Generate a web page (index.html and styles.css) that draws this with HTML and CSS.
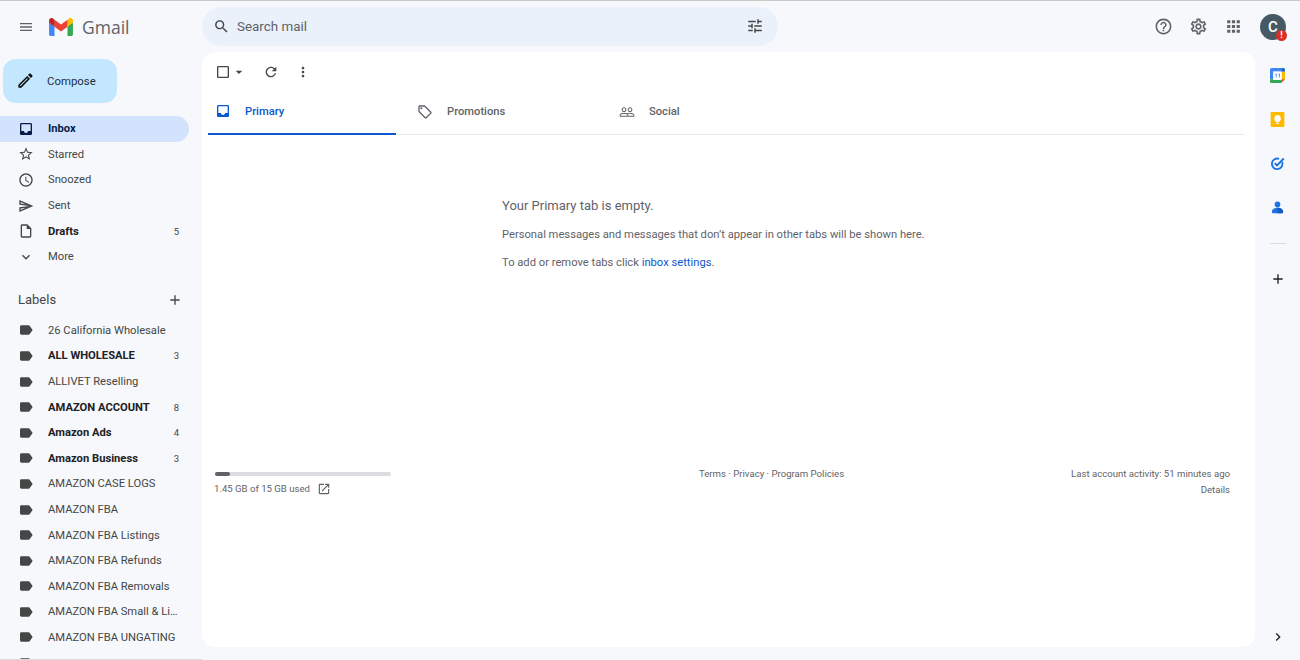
FILE: index.html
```html
<!DOCTYPE html>
<html lang="en">
<head>
    <meta charset="UTF-8">
    <title>Inbox - Gmail</title>
    <link rel="stylesheet" href="styles.css">
</head>
<body>

<svg class="defs" width="0" height="0">
    <symbol id="i-menu" viewBox="0 0 24 24"><path d="M3 18h18v-2H3v2zm0-5h18v-2H3v2zm0-7v2h18V6H3z"/></symbol>
    <symbol id="i-search" viewBox="0 0 24 24"><path d="M15.5 14h-.79l-.28-.27C15.41 12.59 16 11.11 16 9.5 16 5.91 13.09 3 9.5 3S3 5.91 3 9.5 5.91 16 9.5 16c1.61 0 3.09-.59 4.23-1.57l.27.28v.79l5 4.99L20.49 19l-4.99-5zm-6 0C7.01 14 5 11.99 5 9.5S7.01 5 9.5 5 14 7.01 14 9.5 11.99 14 9.5 14z"/></symbol>
    <symbol id="i-tune" viewBox="0 0 24 24"><path d="M3 17v2h6v-2H3zM3 5v2h10V5H3zm10 16v-2h8v-2h-8v-2h-2v6h2zM7 9v2H3v2h4v2h2V9H7zm14 4v-2H11v2h10zm-6-4h2V7h4V5h-4V3h-2v6z"/></symbol>
    <symbol id="i-help" viewBox="0 0 24 24"><path d="M11 18h2v-2h-2v2zm1-16C6.48 2 2 6.48 2 12s4.48 10 10 10 10-4.48 10-10S17.52 2 12 2zm0 18c-4.41 0-8-3.59-8-8s3.59-8 8-8 8 3.59 8 8-3.59 8-8 8zm0-14c-2.21 0-4 1.79-4 4h2c0-1.1.9-2 2-2s2 .9 2 2c0 2-3 1.75-3 5h2c0-2.25 3-2.5 3-5 0-2.21-1.79-4-4-4z"/></symbol>
    <symbol id="i-gear" viewBox="0 0 24 24"><path d="M19.43 12.98c.04-.32.07-.64.07-.98 0-.34-.03-.66-.07-.98l2.11-1.65c.19-.15.24-.42.12-.64l-2-3.46c-.09-.16-.26-.25-.44-.25-.06 0-.12.01-.17.03l-2.49 1c-.52-.4-1.08-.73-1.69-.98l-.38-2.65C14.46 2.18 14.25 2 14 2h-4c-.25 0-.46.18-.49.42l-.38 2.65c-.61.25-1.17.59-1.69.98l-2.49-1c-.06-.02-.12-.03-.18-.03-.17 0-.34.09-.43.25l-2 3.46c-.13.22-.07.49.12.64l2.11 1.65c-.04.32-.07.65-.07.98 0 .33.03.66.07.98l-2.11 1.65c-.19.15-.24.42-.12.64l2 3.46c.09.16.26.25.44.25.06 0 .12-.01.17-.03l2.49-1c.52.4 1.08.73 1.69.98l.38 2.65c.03.24.24.42.49.42h4c.25 0 .46-.18.49-.42l.38-2.65c.61-.25 1.17-.59 1.69-.98l2.49 1c.06.02.12.03.18.03.17 0 .34-.09.43-.25l2-3.46c.12-.22.07-.49-.12-.64l-2.11-1.65zm-1.98-1.71c.04.31.05.52.05.73 0 .21-.02.43-.05.73l-.14 1.13.89.7 1.08.84-.7 1.21-1.27-.51-1.04-.42-.9.68c-.43.32-.84.56-1.25.73l-1.06.43-.16 1.13-.2 1.35h-1.4l-.19-1.35-.16-1.13-1.06-.43c-.43-.18-.83-.41-1.23-.71l-.91-.7-1.06.43-1.27.51-.7-1.21 1.08-.84.89-.7-.14-1.13c-.03-.31-.05-.54-.05-.74s.02-.43.05-.73l.14-1.13-.89-.7-1.08-.84.7-1.21 1.27.51 1.04.42.9-.68c.43-.32.84-.56 1.25-.73l1.06-.43.16-1.13.2-1.35h1.39l.19 1.35.16 1.13 1.06.43c.43.18.83.41 1.23.71l.91.7 1.06-.43 1.27-.51.7 1.21-1.07.85-.89.7.14 1.13zM12 8c-2.21 0-4 1.79-4 4s1.79 4 4 4 4-1.79 4-4-1.79-4-4-4zm0 6c-1.1 0-2-.9-2-2s.9-2 2-2 2 .9 2 2-.9 2-2 2z"/></symbol>
    <symbol id="i-apps" viewBox="0 0 24 24"><path d="M4 8h4V4H4v4zm6 12h4v-4h-4v4zm-6 0h4v-4H4v4zm0-6h4v-4H4v4zm6 0h4v-4h-4v4zm6-10v4h4V4h-4zm-6 4h4V4h-4v4zm6 6h4v-4h-4v4zm0 6h4v-4h-4v4z"/></symbol>
    <symbol id="i-edit" viewBox="0 0 24 24"><path d="M14.06 9.02l.92.92L5.92 19H5v-.92l9.06-9.06M17.66 3c-.25 0-.51.1-.7.29l-1.83 1.83 3.75 3.75 1.83-1.83c.39-.39.39-1.02 0-1.41l-2.34-2.34c-.2-.2-.45-.29-.71-.29zm-3.6 3.19L3 17.25V21h3.75L17.81 9.94l-3.75-3.75z"/></symbol>
    <symbol id="i-inbox" viewBox="0 0 24 24"><path d="M19 3H4.99c-1.11 0-1.98.89-1.98 2L3 19c0 1.1.88 2 1.99 2H19c1.1 0 2-.9 2-2V5c0-1.11-.9-2-2-2zm0 12h-4c0 1.66-1.35 3-3 3s-3-1.34-3-3H4.99V5H19v10z"/></symbol>
    <symbol id="i-star" viewBox="0 0 24 24"><path d="M22 9.24l-7.19-.62L12 2 9.19 8.63 2 9.24l5.46 4.73L5.82 21 12 17.27 18.18 21l-1.63-7.03L22 9.24zM12 15.4l-3.76 2.27 1-4.28-3.32-2.88 4.38-.38L12 6.1l1.71 4.04 4.38.38-3.32 2.88 1 4.28L12 15.4z"/></symbol>
    <symbol id="i-clock" viewBox="0 0 24 24"><path d="M11.99 2C6.47 2 2 6.48 2 12s4.47 10 9.99 10C17.52 22 22 17.52 22 12S17.52 2 11.99 2zM12 20c-4.42 0-8-3.58-8-8s3.58-8 8-8 8 3.58 8 8-3.58 8-8 8zm.5-13H11v6l5.25 3.15.75-1.23-4.5-2.67z"/></symbol>
    <symbol id="i-send" viewBox="0 0 24 24"><path d="M4.01 6.03l7.51 3.22-7.52-1 .01-2.22m7.5 8.72L4 17.97v-2.22l7.51-1M2.01 3L2 10l15 2-15 2 .01 7L23 12 2.01 3z"/></symbol>
    <symbol id="i-draft" viewBox="0 0 24 24"><path d="M14 2H6c-1.1 0-2 .9-2 2v16c0 1.1.9 2 2 2h12c1.1 0 2-.9 2-2V8l-6-6zM6 20V4h7v5h5v11H6z"/></symbol>
    <symbol id="i-more" viewBox="0 0 24 24"><path d="M16.59 8.59L12 13.17 7.41 8.59 6 10l6 6 6-6z"/></symbol>
    <symbol id="i-label" viewBox="0 0 24 24"><path d="M17.63 5.84C17.27 5.33 16.67 5 16 5L5 5.01C3.9 5.01 3 5.9 3 7v10c0 1.1.9 1.99 2 1.99L16 19c.67 0 1.27-.33 1.63-.84L22 12l-4.37-6.16z"/></symbol>
    <symbol id="i-add" viewBox="0 0 24 24"><path d="M19 13h-6v6h-2v-6H5v-2h6V5h2v6h6v2z"/></symbol>
    <symbol id="i-check" viewBox="0 0 24 24"><path d="M19 5v14H5V5h14m0-2H5c-1.1 0-2 .9-2 2v14c0 1.1.9 2 2 2h14c1.1 0 2-.9 2-2V5c0-1.1-.9-2-2-2z"/></symbol>
    <symbol id="i-drop" viewBox="0 0 24 24"><path d="M7 10l5 5 5-5z"/></symbol>
    <symbol id="i-refresh" viewBox="0 0 24 24"><path d="M17.65 6.35C16.2 4.9 14.21 4 12 4c-4.42 0-7.99 3.58-7.99 8s3.57 8 7.99 8c3.73 0 6.84-2.55 7.73-6h-2.08c-.82 2.33-3.04 4-5.65 4-3.31 0-6-2.69-6-6s2.69-6 6-6c1.66 0 3.14.69 4.22 1.78L13 11h7V4l-2.35 2.35z"/></symbol>
    <symbol id="i-vert" viewBox="0 0 24 24"><path d="M12 8c1.1 0 2-.9 2-2s-.9-2-2-2-2 .9-2 2 .9 2 2 2zm0 2c-1.1 0-2 .9-2 2s.9 2 2 2 2-.9 2-2-.9-2-2-2zm0 6c-1.1 0-2 .9-2 2s.9 2 2 2 2-.9 2-2-.9-2-2-2z"/></symbol>
    <symbol id="i-tag" viewBox="0 0 24 24"><path d="M21.41 11.58l-9-9C12.05 2.22 11.55 2 11 2H4c-1.1 0-2 .9-2 2v7c0 .55.22 1.05.59 1.42l9 9c.36.36.86.58 1.41.58s1.05-.22 1.41-.59l7-7c.37-.36.59-.86.59-1.41s-.23-1.06-.59-1.42zM13 20.01L4 11V4h7v-.01l9 9-7 7.02z"/><circle cx="6.5" cy="6.5" r="1.5"/></symbol>
    <symbol id="i-people" viewBox="0 0 24 24"><path d="M16.5 13c-1.2 0-3.07.34-4.5 1-1.43-.67-3.3-1-4.5-1C5.33 13 1 14.08 1 16.25V19h22v-2.75c0-2.17-4.33-3.25-6.5-3.25zm-4 4.5h-10v-1.25c0-.54 2.56-1.75 5-1.75s5 1.21 5 1.75v1.25zm9 0H14v-1.25c0-.46-.2-.86-.52-1.22.88-.3 1.96-.53 3.02-.53 2.44 0 5 1.21 5 1.75v1.25zM7.5 12c1.93 0 3.5-1.57 3.5-3.5S9.43 5 7.5 5 4 6.57 4 8.5 5.57 12 7.5 12zm0-5.5c1.1 0 2 .9 2 2s-.9 2-2 2-2-.9-2-2 .9-2 2-2zm9 5.5c1.93 0 3.5-1.57 3.5-3.5S18.43 5 16.5 5 13 6.57 13 8.5s1.57 3.5 3.5 3.5zm0-5.5c1.1 0 2 .9 2 2s-.9 2-2 2-2-.9-2-2 .9-2 2-2z"/></symbol>
    <symbol id="i-open" viewBox="0 0 24 24"><path d="M19 19H5V5h7V3H5c-1.11 0-2 .9-2 2v14c0 1.1.89 2 2 2h14c1.1 0 2-.9 2-2v-7h-2v7zM14 3v2h3.59l-9.83 9.83 1.41 1.41L19 6.41V10h2V3h-7z"/></symbol>
    <symbol id="i-right" viewBox="0 0 24 24"><path d="M10 6L8.59 7.41 13.17 12l-4.58 4.59L10 18l6-6z"/></symbol>
</svg>

<header class="topbar">
    <svg class="icon icon-menu"><use href="#i-menu"/></svg>
    <svg class="gmail-logo" viewBox="0 0 256 193">
        <path fill="#4285F4" d="M58.182 192.05V93.14L27.507 65.077 0 49.504v125.091c0 9.658 7.825 17.455 17.455 17.455h40.727z"/>
        <path fill="#34A853" d="M197.818 192.05h40.727c9.659 0 17.455-7.826 17.455-17.455V49.505l-31.156 17.837-27.026 25.798v98.91z"/>
        <path fill="#EA4335" d="M58.182 93.14l-4.174-38.647 4.174-36.989L128 69.868l69.818-52.364 4.669 34.992-4.669 40.644L128 145.504z"/>
        <path fill="#FBBC04" d="M197.818 17.504V93.14L256 49.504V26.231c0-21.585-24.64-33.89-41.89-20.945l-16.292 12.218z"/>
        <path fill="#C5221F" d="M0 49.504l26.759 20.07L58.182 93.14V17.504L41.89 5.286C24.61-7.66 0 4.646 0 26.23v23.273z"/>
    </svg>
    <span class="gmail-word">Gmail</span>
    <div class="search">
        <svg class="icon icon-search"><use href="#i-search"/></svg>
        <span class="search-text">Search mail</span>
        <svg class="icon icon-tune"><use href="#i-tune"/></svg>
    </div>
    <div class="top-actions">
        <svg class="icon icon-top"><use href="#i-help"/></svg>
        <svg class="icon icon-top"><use href="#i-gear"/></svg>
        <svg class="icon icon-top"><use href="#i-apps"/></svg>
        <div class="avatar">C<span class="avatar-alert">!</span></div>
    </div>
</header>

<div class="layout">
    <aside class="sidebar">
        <div class="compose">
            <svg class="icon icon-edit"><use href="#i-edit"/></svg>
            <span>Compose</span>
        </div>

        <nav class="nav">
            <a class="nav-row active"><svg class="icon"><use href="#i-inbox"/></svg><span class="nav-name">Inbox</span></a>
            <a class="nav-row"><svg class="icon"><use href="#i-star"/></svg><span class="nav-name">Starred</span></a>
            <a class="nav-row"><svg class="icon"><use href="#i-clock"/></svg><span class="nav-name">Snoozed</span></a>
            <a class="nav-row"><svg class="icon"><use href="#i-send"/></svg><span class="nav-name">Sent</span></a>
            <a class="nav-row unread"><svg class="icon"><use href="#i-draft"/></svg><span class="nav-name">Drafts</span><span class="nav-count">5</span></a>
            <a class="nav-row"><svg class="icon"><use href="#i-more"/></svg><span class="nav-name">More</span></a>
        </nav>

        <div class="labels-head">
            <span>Labels</span>
            <svg class="icon icon-add"><use href="#i-add"/></svg>
        </div>

        <nav class="nav">
            <a class="nav-row"><svg class="icon"><use href="#i-label"/></svg><span class="nav-name">26 California Wholesale</span></a>
            <a class="nav-row unread"><svg class="icon"><use href="#i-label"/></svg><span class="nav-name">ALL WHOLESALE</span><span class="nav-count">3</span></a>
            <a class="nav-row"><svg class="icon"><use href="#i-label"/></svg><span class="nav-name">ALLIVET Reselling</span></a>
            <a class="nav-row unread"><svg class="icon"><use href="#i-label"/></svg><span class="nav-name">AMAZON ACCOUNT</span><span class="nav-count">8</span></a>
            <a class="nav-row unread"><svg class="icon"><use href="#i-label"/></svg><span class="nav-name">Amazon Ads</span><span class="nav-count">4</span></a>
            <a class="nav-row unread"><svg class="icon"><use href="#i-label"/></svg><span class="nav-name">Amazon Business</span><span class="nav-count">3</span></a>
            <a class="nav-row"><svg class="icon"><use href="#i-label"/></svg><span class="nav-name">AMAZON CASE LOGS</span></a>
            <a class="nav-row"><svg class="icon"><use href="#i-label"/></svg><span class="nav-name">AMAZON FBA</span></a>
            <a class="nav-row"><svg class="icon"><use href="#i-label"/></svg><span class="nav-name">AMAZON FBA Listings</span></a>
            <a class="nav-row"><svg class="icon"><use href="#i-label"/></svg><span class="nav-name">AMAZON FBA Refunds</span></a>
            <a class="nav-row"><svg class="icon"><use href="#i-label"/></svg><span class="nav-name">AMAZON FBA Removals</span></a>
            <a class="nav-row"><svg class="icon"><use href="#i-label"/></svg><span class="nav-name">AMAZON FBA Small &amp; Light</span></a>
            <a class="nav-row"><svg class="icon"><use href="#i-label"/></svg><span class="nav-name">AMAZON FBA UNGATING</span></a>
            <a class="nav-row"><svg class="icon"><use href="#i-label"/></svg><span class="nav-name">AMAZON Seller</span></a>
        </nav>
    </aside>

    <main class="card">
        <div class="toolbar">
            <svg class="icon icon-check"><use href="#i-check"/></svg>
            <svg class="icon icon-drop"><use href="#i-drop"/></svg>
            <svg class="icon icon-refresh"><use href="#i-refresh"/></svg>
            <svg class="icon icon-vert"><use href="#i-vert"/></svg>
        </div>

        <div class="tabs">
            <div class="tab active"><svg class="icon"><use href="#i-inbox"/></svg><span>Primary</span></div>
            <div class="tab"><svg class="icon"><use href="#i-tag"/></svg><span>Promotions</span></div>
            <div class="tab"><svg class="icon"><use href="#i-people"/></svg><span>Social</span></div>
        </div>

        <section class="empty">
            <p class="empty-title">Your Primary tab is empty.</p>
            <p class="empty-line">Personal messages and messages that don’t appear in other tabs will be shown here.</p>
            <p class="empty-line">To add or remove tabs click <a class="link">inbox settings</a>.</p>
        </section>

        <footer class="foot">
            <div class="foot-storage">
                <div class="bar"><div class="bar-fill"></div></div>
                <div class="storage-text">1.45 GB of 15 GB used <svg class="icon icon-open"><use href="#i-open"/></svg></div>
            </div>
            <div class="foot-terms">Terms · Privacy · Program Policies</div>
            <div class="foot-activity">
                <div>Last account activity: 51 minutes ago</div>
                <div class="foot-details">Details</div>
            </div>
        </footer>
    </main>

    <aside class="rail">
        <svg class="rail-icon" viewBox="0 0 24 24">
            <path fill="#fff" d="M5 5h14v14H5z"/>
            <path fill="#4285F4" d="M18 0H6v5h12z"/>
            <path fill="#1967D2" d="M18 0v6h6V2.5A2.5 2.5 0 0 0 21.500 0z"/>
            <path fill="#4285F4" d="M0 2.500V18h5V5h13V0H2.500A2.500 2.500 0 0 0 0 2.500z"/>
            <path fill="#FBBC04" d="M19 6h5v12h-5z"/>
            <path fill="#34A853" d="M0 18v3.500A2.500 2.500 0 0 0 2.500 24H18v-5H5v-1z"/>
            <path fill="#EA4335" d="M18 19v5l6-6h-5z"/>
            <path fill="#4285F4" d="M8 9h2.600v6H9.300v-4.700H8zM13 9h3v6h-1.300v-4.700H13z"/>
        </svg>
        <svg class="rail-icon" viewBox="0 0 24 24">
            <rect x="1" y="0" width="22" height="24" rx="2" fill="#FFBA00"/>
            <path fill="#fff" d="M12 5a5.300 5.300 0 0 0-3 9.700V16h6v-1.300A5.300 5.300 0 0 0 12 5zM9.800 17h4.400v1.200c0 .5-.4.800-.8.800h-2.800c-.4 0-.8-.3-.8-.8z"/>
        </svg>
        <svg class="rail-icon" viewBox="0 0 24 24">
            <path fill="none" stroke="#1a73e8" stroke-width="3" d="M19.500 9.500A8.500 8.500 0 1 1 14.500 4.500"/>
            <path fill="none" stroke="#1a73e8" stroke-width="3" d="M7.500 11.500l3.700 3.700L22 4"/>
        </svg>
        <svg class="rail-icon" viewBox="0 0 24 24">
            <circle cx="12" cy="7" r="4.500" fill="#1a73e8"/>
            <path fill="#1a73e8" d="M5 21a2 2 0 0 1-2-2c0-4 4-6.500 9-6.500s9 2.500 9 6.500a2 2 0 0 1-2 2z"/>
            <path fill="#185abc" d="M12 12.500c5 0 9 2.500 9 6.500a2 2 0 0 1-2 2h-7z"/>
        </svg>
        <div class="rail-divider"></div>
        <svg class="icon icon-rail-add"><use href="#i-add"/></svg>
        <svg class="icon icon-rail-right"><use href="#i-right"/></svg>
    </aside>
</div>

</body>
</html>
```

FILE: styles.css
```css
html, body {
    margin: 0;
    height: 660px;
    overflow: hidden;
}
body {
    font-family: Roboto, "Noto Sans", sans-serif;
    font-size: 11.2px;
    color: #444746;
    background-color: #f6f8fc;
    border-top: 1px solid #c9c9c9;
    box-sizing: border-box;
}
p {
    margin: 0;
}
.defs {
    position: absolute;
}
.icon {
    display: block;
    width: 16px;
    height: 16px;
    flex: none;
    fill: #444746;
}

/* top bar */
.topbar {
    display: flex;
    align-items: center;
    height: 51px;
    padding-left: 18px;
}
.icon-menu {
    fill: #5f6368;
    margin-top: 1px;
}
.gmail-logo {
    width: 24px;
    height: 18px;
    margin: 0 0 0 15px;
}
.gmail-word {
    margin-left: 9px;
    width: 120px;
    font-family: "Open Sans", sans-serif;
    font-size: 17.5px;
    color: #5f6368;
}
.search {
    display: flex;
    align-items: center;
    width: 576px;
    height: 39px;
    margin-bottom: 1px;
    box-sizing: border-box;
    padding: 0 14px 0 11px;
    border-radius: 20px;
    background-color: #eaf1fb;
}
.icon-search {
    width: 17px;
    height: 17px;
}
.search-text {
    flex: 1;
    margin-left: 7px;
    font-size: 13.4px;
    color: #5f6368;
}
.icon-tune {
    width: 18px;
    height: 18px;
}
.top-actions {
    display: flex;
    align-items: center;
    margin-left: auto;
    padding-right: 14px;
}
.icon-top {
    width: 19px;
    height: 19px;
    margin-right: 16px;
    fill: #5f6368;
}
.avatar {
    position: relative;
    width: 26px;
    height: 26px;
    margin-left: 1px;
    border-radius: 50%;
    background-color: #455a64;
    color: #fff;
    font-size: 15px;
    font-weight: 500;
    line-height: 26px;
    text-align: center;
}
.avatar-alert {
    position: absolute;
    right: -1px;
    bottom: -1px;
    width: 11px;
    height: 11px;
    border-radius: 50%;
    background-color: #d93025;
    font-size: 9px;
    font-weight: 700;
    line-height: 11px;
}

/* layout */
.layout {
    display: flex;
    height: 608px;
}
.sidebar {
    width: 202px;
    flex: none;
    height: 608px;
    box-sizing: border-box;
    overflow: hidden;
    border-bottom: 1px solid #dcdcdc;
    padding-top: 7px;
}
.compose {
    display: flex;
    align-items: center;
    width: 114px;
    height: 44px;
    margin-left: 3px;
    padding-bottom: 1px;
    box-sizing: border-box;
    border-radius: 13px;
    background-color: #c2e7ff;
    color: #1f2f3f;
    font-size: 11.4px;
}
.icon-edit {
    width: 19px;
    height: 19px;
    margin: 0 12px 0 13px;
    fill: #111;
}
.nav {
    width: 189px;
}
.compose + .nav {
    margin-top: 13px;
}
.nav-row {
    display: flex;
    align-items: center;
    height: 25.6px;
    padding: 0 10px 0 18px;
    color: #444746;
    white-space: nowrap;
}
.nav-row .icon {
    width: 16px;
    height: 16px;
    margin-right: 14px;
    fill: #444746;
}
.nav-name {
    flex: 1;
    min-width: 0;
    overflow: hidden;
    text-overflow: ellipsis;
}
.nav-count {
    margin-left: 8px;
    font-size: 9.5px;
}
.nav-row.unread {
    font-weight: 700;
    color: #202124;
}
.nav-count {
    font-weight: 400;
    color: #444746;
}
.nav-row.active {
    border-radius: 0 13px 13px 0;
    background-color: #d3e3fd;
    font-weight: 700;
    color: #041e49;
}
.nav-row.active .icon {
    fill: #041e49;
}
.labels-head {
    display: flex;
    align-items: center;
    justify-content: space-between;
    width: 189px;
    box-sizing: border-box;
    height: 32px;
    margin-top: 14px;
    padding: 0 6px 0 18px;
    font-size: 13px;
    color: #444746;
}
.labels-head + .nav {
    margin-top: 2px;
}

/* main card */
.card {
    display: flex;
    flex-direction: column;
    width: 1053px;
    height: 595px;
    flex: none;
    box-sizing: border-box;
    border-radius: 13px;
    background-color: #fff;
}
.toolbar {
    display: flex;
    align-items: center;
    height: 39px;
    flex: none;
    padding-left: 13px;
}
.toolbar .icon {
    fill: #444746;
}
.icon-check {
    width: 16px;
    height: 16px;
}
.icon-drop {
    margin-left: 0;
}
.icon-refresh {
    margin-left: 16px;
}
.icon-vert {
    margin-left: 16px;
}
.tabs {
    display: flex;
    height: 44px;
    flex: none;
    margin: 0 11px 0 6px;
    border-bottom: 1px solid #e8eaed;
    box-sizing: border-box;
}
.tab {
    display: flex;
    align-items: center;
    width: 188px;
    margin-right: 14px;
    box-sizing: border-box;
    padding-left: 7px;
    padding-bottom: 2px;
    color: #5f6368;
    font-weight: 500;
}
.tab .icon {
    margin-right: 14px;
    fill: #5f6368;
}
.tab.active {
    height: 44px;
    border-bottom: 2px solid #0b57d0;
    color: #0b57d0;
}
.tab.active .icon {
    fill: #0b57d0;
}
.empty {
    padding: 62px 0 0 300px;
    color: #5f6368;
}
.empty-title {
    font-size: 13px;
    line-height: 18px;
}
.empty-line {
    margin-top: 11px;
    line-height: 17px;
}
.link {
    color: #0b57d0;
}
.foot {
    display: flex;
    justify-content: space-between;
    margin-top: 201px;
    padding: 0 25px 0 12px;
    font-size: 9.6px;
    color: #5f6368;
}
.foot-storage {
    width: 177px;
}
.bar {
    width: 176px;
    height: 3.500px;
    margin: 0 0 0 1px;
    border-radius: 2px;
    background-color: #dadce0;
}
.bar-fill {
    width: 15px;
    height: 100%;
    border-radius: 2px;
    background-color: #5f6368;
}
.storage-text {
    display: flex;
    align-items: center;
    gap: 7px;
    margin-top: 6px;
    white-space: nowrap;
}
.icon-open {
    width: 14px;
    height: 14px;
    fill: #5f6368;
}
.foot-terms {
    margin-left: 81px;
    line-height: 14px;
    margin-top: -5px;
}
.foot-activity {
    margin-top: -5px;
    line-height: 14px;
    text-align: right;
}
.foot-details {
    margin-top: 2px;
}

/* right rail */
.rail {
    display: flex;
    flex-direction: column;
    align-items: center;
    flex: 1;
    padding-top: 16px;
    padding-left: 0;
}
.rail-icon {
    display: block;
    width: 15px;
    height: 15px;
    margin-bottom: 29px;
    flex: none;
}
.rail-divider {
    width: 16px;
    height: 1px;
    margin-top: -1px;
    background-color: #dadce0;
}
.icon-rail-add {
    margin-top: 27px;
    fill: #202124;
}
.icon-rail-right {
    margin-top: 342px;
    fill: #202124;
}
```
